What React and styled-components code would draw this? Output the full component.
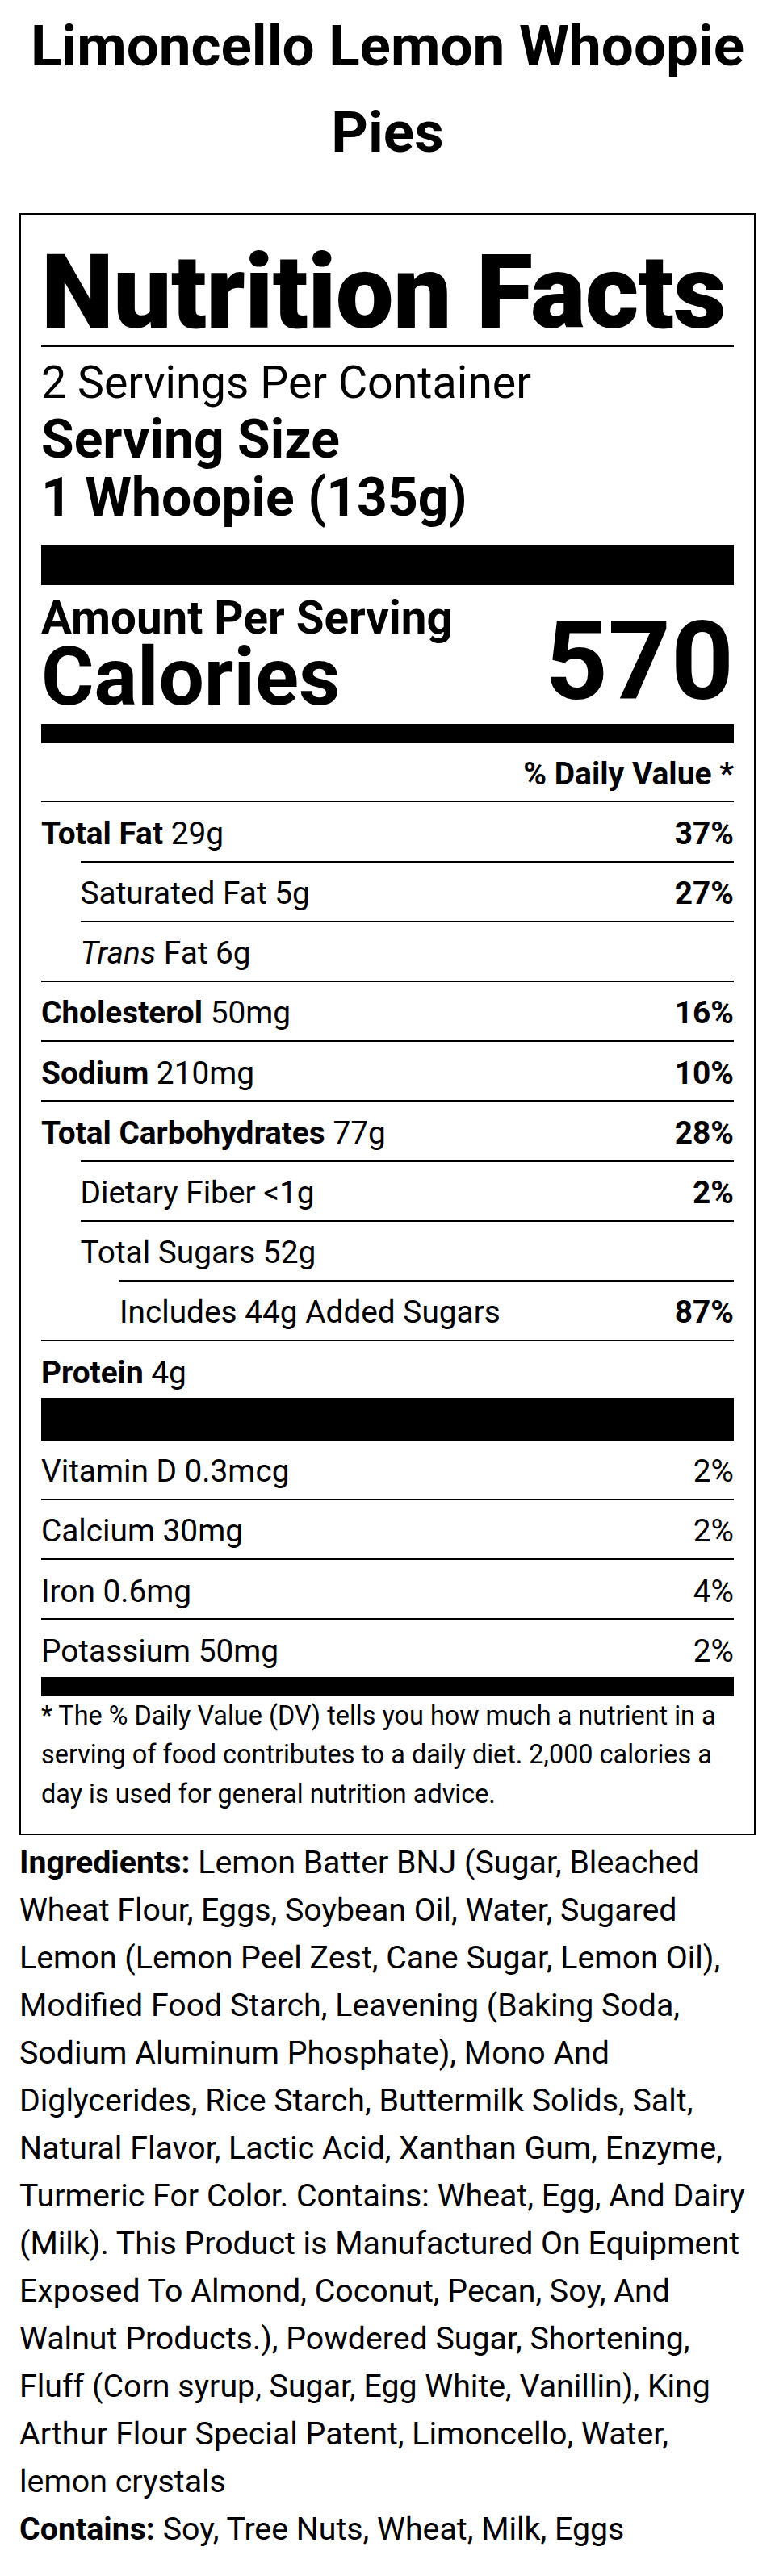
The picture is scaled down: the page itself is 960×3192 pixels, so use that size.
import React from 'react'
import styled, { createGlobalStyle } from 'styled-components'

const GlobalStyle = createGlobalStyle`
    body {
        margin: 0;
        background: #fff;
        color: #000;
        font-family: Roboto, "Liberation Sans", Arial, sans-serif;
    }
`

const Page = styled.div`
    padding: 4px 24px 24px;
`
const Title = styled.h1`
    margin: 0 0 47px;
    font-size: 71px;
    line-height: 106.5px;
    font-weight: 700;
    text-align: center;
`
const Label = styled.section`
    border: 2px solid #000;
    padding: 32px 25px 25px;
`
const Heading = styled.h2`
    margin: 0;
    font-size: 128px;
    line-height: 128px;
    font-weight: 900;
    letter-spacing: -0.6px;
`
const Rule = styled.div`
    height: 2.4px;
    margin-top: 1.8px;
    background: #000;
`
const Servings = styled.div`
    margin-top: 12px;
    font-size: 55.5px;
    line-height: 65px;
`
const ServingSize = styled.div`
    display: flex;
    flex-direction: column;
    margin-top: 2px;
    font-size: 66px;
    line-height: 72px;
    font-weight: 700;
`
const Bar = styled.div`
    height: ${p => p.$h}px;
    margin-top: ${p => p.$mt}px;
    background: #000;
`
const CaloriesBlock = styled.div`
    display: flex;
    justify-content: space-between;
    align-items: flex-end;
    margin-top: 13.7px;
    font-weight: 700;
`
const Amount = styled.div`
    font-size: 56.5px;
    line-height: 55px;
`
const CaloriesLabel = styled.div`
    font-size: 100px;
    line-height: 90px;
`
const CaloriesValue = styled.div`
    font-size: 136px;
    line-height: 128px;
`
const DailyHeader = styled.div`
    margin-top: 16px;
    padding-bottom: 10.2px;
    text-align: right;
    font-size: 39px;
    line-height: 45px;
    font-weight: 700;
`
const Row = styled.div`
    display: flex;
    justify-content: space-between;
    margin-left: ${p => (p.$indent || 0) * 48.5}px;
    padding: 6.4px 0 2px;
    border-top: 2px solid #000;
    font-size: 38.8px;
    line-height: 63.8px;
`
const Percent = styled.span`
    font-weight: ${p => (p.$light ? 400 : 700)};
`
const Footnote = styled.p`
    margin: 0;
    font-size: 32.4px;
    line-height: 48.6px;
`
const Ingredients = styled.p`
    margin: 4.7px 0 0;
    font-size: 39.3px;
    line-height: 59px;
`
const Contains = styled.p`
    margin: 0;
    font-size: 39.3px;
    line-height: 59px;
`

const nutrients = [
    { name: 'Total Fat', amount: '29g', dv: '37%' },
    { name: 'Saturated Fat', amount: '5g', dv: '27%', indent: 1, plain: true },
    { name: 'Trans', amount: 'Fat 6g', indent: 1, italic: true },
    { name: 'Cholesterol', amount: '50mg', dv: '16%' },
    { name: 'Sodium', amount: '210mg', dv: '10%' },
    { name: 'Total Carbohydrates', amount: '77g', dv: '28%' },
    { name: 'Dietary Fiber', amount: '<1g', dv: '2%', indent: 1, plain: true },
    { name: 'Total Sugars', amount: '52g', indent: 1, plain: true },
    { name: 'Includes 44g Added Sugars', amount: '', dv: '87%', indent: 2, plain: true },
    { name: 'Protein', amount: '4g' },
]

const vitamins = [
    { name: 'Vitamin D 0.3mcg', dv: '2%' },
    { name: 'Calcium 30mg', dv: '2%' },
    { name: 'Iron 0.6mg', dv: '4%' },
    { name: 'Potassium 50mg', dv: '2%' },
]

const NutrientName = ({ item }) => {
    if (item.italic) return <span><i>{item.name}</i> {item.amount}</span>
    if (item.plain) return <span>{item.name}{item.amount ? ' ' + item.amount : ''}</span>
    return <span><b>{item.name}</b> {item.amount}</span>
}

const App = () => {
  return (
    <Page>
        <GlobalStyle />
        <Title>Limoncello Lemon Whoopie Pies</Title>
        <Label>
            <Heading>Nutrition Facts</Heading>
            <Rule />
            <Servings>2 Servings Per Container</Servings>
            <ServingSize>
                <span>Serving Size</span>
                <span>1 Whoopie (135g)</span>
            </ServingSize>
            <Bar $h={50.5} $mt={21.6} />
            <CaloriesBlock>
                <div>
                    <Amount>Amount Per Serving</Amount>
                    <CaloriesLabel>Calories</CaloriesLabel>
                </div>
                <CaloriesValue>570</CaloriesValue>
            </CaloriesBlock>
            <Bar $h={24} $mt={13.3} />
            <DailyHeader>% Daily Value *</DailyHeader>
            {nutrients.map(item => (
                <Row key={item.name} $indent={item.indent}>
                    <NutrientName item={item} />
                    {item.dv && <Percent>{item.dv}</Percent>}
                </Row>
            ))}
            <Bar $h={50.5} $mt={-2} />
            {vitamins.map(item => (
                <Row key={item.name}>
                    <span>{item.name}</span>
                    <Percent $light>{item.dv}</Percent>
                </Row>
            ))}
            <Bar $h={24} $mt={-2} />
            <Footnote>
                * The % Daily Value (DV) tells you how much a nutrient in a serving of food contributes to a daily diet. 2,000 calories a day is used for general nutrition advice.
            </Footnote>
        </Label>
        <Ingredients>
            <b>Ingredients:</b> Lemon Batter BNJ (Sugar, Bleached Wheat Flour, Eggs, Soybean Oil, Water, Sugared Lemon (Lemon Peel Zest, Cane Sugar, Lemon Oil), Modified Food Starch, Leavening (Baking Soda, Sodium Aluminum Phosphate), Mono And Diglycerides, Rice Starch, Buttermilk Solids, Salt, Natural Flavor, Lactic Acid, Xanthan Gum, Enzyme, Turmeric For Color. Contains: Wheat, Egg, And Dairy (Milk). This Product is Manufactured On Equipment Exposed To Almond, Coconut, Pecan, Soy, And Walnut Products.), Powdered Sugar, Shortening, Fluff (Corn syrup, Sugar, Egg White, Vanillin), King Arthur Flour Special Patent, Limoncello, Water, lemon crystals
        </Ingredients>
        <Contains>
            <b>Contains:</b> Soy, Tree Nuts, Wheat, Milk, Eggs
        </Contains>
    </Page>
  )
}

export default App
